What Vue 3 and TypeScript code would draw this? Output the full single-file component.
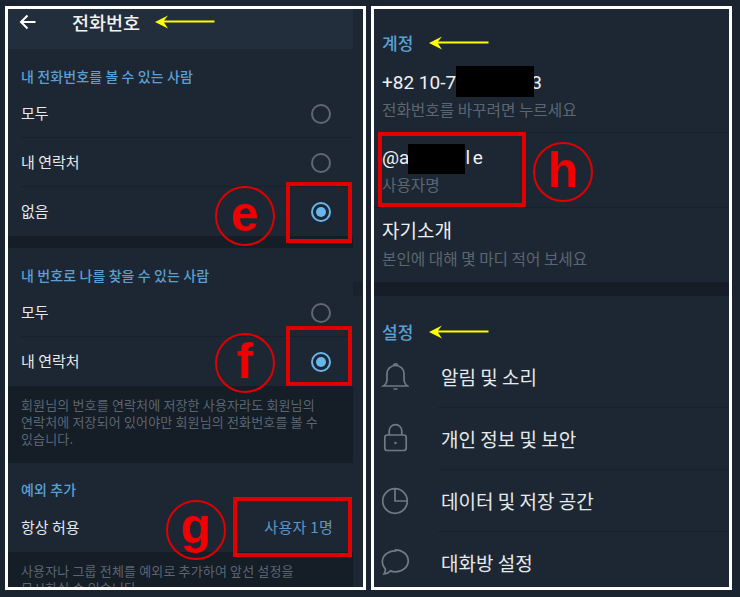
<script setup lang="ts">
const topRows = [
  { label: '모두', on: false },
  { label: '내 연락처', on: false },
  { label: '없음', on: true },
]
const findRows = [
  { label: '모두', on: false },
  { label: '내 연락처', on: true },
]
const menu = [
  { label: '알림 및 소리', icon: 'bell' },
  { label: '개인 정보 및 보안', icon: 'lock' },
  { label: '데이터 및 저장 공간', icon: 'pie' },
  { label: '대화방 설정', icon: 'chat' },
]
</script>

<template>
  <div class="page">
    <section class="panel left">
      <div class="inner">
        <header class="bar">
          <svg class="back" width="18" height="16" viewBox="0 0 18 16" fill="none" stroke="#fff" stroke-width="2">
            <path d="M16.5 8H2M8.5 1.5 2 8l6.5 6.500" />
          </svg>
          <span class="bar-title">전화번호</span>
          <svg class="arrow" width="60" height="16" viewBox="0 0 60 16"><path d="M0 8 13 1.500 9 6.600H59.500V8.600H9L13 14.500Z" fill="#ffff00" /></svg>
        </header>

        <div class="group first">
          <h3 class="sec">내 전화번호를 볼 수 있는 사람</h3>
          <div v-for="r in topRows" :key="r.label" class="row">
            <span class="label">{{ r.label }}</span>
            <span class="radio" :class="{ on: r.on }"></span>
          </div>
        </div>
        <div class="gap"></div>

        <div class="group second">
          <h3 class="sec">내 번호로 나를 찾을 수 있는 사람</h3>
          <div v-for="r in findRows" :key="r.label" class="row">
            <span class="label">{{ r.label }}</span>
            <span class="radio" :class="{ on: r.on }"></span>
          </div>
        </div>
        <p class="note">회원님의 번호를 연락처에 저장한 사용자라도 회원님의<br />연락처에 저장되어 있어야만 회원님의 전화번호를 볼 수<br />있습니다.</p>

        <div class="group third">
          <h3 class="sec">예외 추가</h3>
          <div class="row plain">
            <span class="label">항상 허용</span>
            <span class="value label">사용자 1명</span>
          </div>
        </div>
        <p class="note last">사용자나 그룹 전체를 예외로 추가하여 앞선 설정을<br />무시하실 수 있습니다.</p>

        <div class="edge"></div>
        <div class="mark box-e"></div>
        <div class="mark box-f"></div>
        <div class="mark box-g"></div>
        <div class="badge badge-e">e</div>
        <div class="badge badge-f">f</div>
        <div class="badge badge-g">g</div>
      </div>
    </section>

    <section class="panel right">
      <div class="inner">
        <div class="account">
          <h3 class="sec big">계정
            <svg width="60" height="16" viewBox="0 0 60 16"><path d="M0 8 13 1.500 9 6.600H59.500V8.600H9L13 14.500Z" fill="#ffff00" /></svg>
          </h3>
          <div class="info phone">
            <div class="main">+82 10-7<span class="mask phone-mask"></span>3</div>
            <div class="sub">전화번호를 바꾸려면 누르세요</div>
          </div>
          <div class="info user">
            <div class="main">@a<span class="mask user-mask"></span>l e</div>
            <div class="sub">사용자명</div>
          </div>
          <div class="info bio">
            <div class="main">자기소개</div>
            <div class="sub">본인에 대해 몇 마디 적어 보세요</div>
          </div>
        </div>
        <div class="gap wide"></div>
        <div class="settings">
          <h3 class="sec big">설정
            <svg width="60" height="16" viewBox="0 0 60 16"><path d="M0 8 13 1.500 9 6.600H59.500V8.600H9L13 14.500Z" fill="#ffff00" /></svg>
          </h3>
          <div v-for="m in menu" :key="m.label" class="menu-row">
            <svg class="ico" width="28" height="30" viewBox="0 0 28 30" fill="none" stroke="#6f7a86" stroke-width="1.700">
              <template v-if="m.icon === 'bell'">
                <path d="M2.500 25c2.500-1.500 3.500-3.500 3.500-7.500v-5C6 8 9.500 4.500 14.500 4.500S23 8 23 12.500v5c0 4 1 6 3.500 7.500z" />
                <path d="M12.500 4.700c0-2.500 4-2.500 4 0M12.500 28h4" />
              </template>
              <template v-else-if="m.icon === 'lock'">
                <rect x="3.800" y="12" width="21.400" height="15.500" rx="2.500" />
                <path d="M8.200 12V8c0-3.600 2.700-6.300 6.300-6.300S20.800 4.400 20.800 8v4" />
                <circle cx="14.500" cy="20" r="1.200" fill="#6f7a86" stroke="none" />
              </template>
              <template v-else-if="m.icon === 'pie'">
                <circle cx="14" cy="16" r="12.300" />
                <path d="M14 3.700V16h12.300" />
              </template>
              <template v-else>
                <path d="M14.500 2.800c7 0 12.700 4.900 12.700 11s-5.700 11-12.700 11c-1.800 0-3.500-.3-5-.9-1.600 1.800-3.900 2.900-6.500 3.100 1-1.500 1.500-3.200 1.300-5.100-1.900-2-3-4.700-3-7.100 0-6.100 5.700-11 13.200-11z" />
              </template>
            </svg>
            <span class="menu-label">{{ m.label }}</span>
          </div>
        </div>

        <div class="mark box-h"></div>
        <div class="badge badge-h">h</div>
      </div>
    </section>
  </div>
</template>

<style>
html,
body {
  margin: 0;
  background: #1a2330;
}
</style>

<style scoped>
.page {
  width: 740px;
  height: 597px;
  box-sizing: border-box;
  padding: 6px 0 7px 5px;
  display: flex;
  gap: 5px;
  overflow: hidden;
  background: #1a2330;
  font-family: 'Noto Sans CJK KR', 'Liberation Sans', sans-serif;
  color: #e6e9ec;
}
.panel {
  width: 361px;
  height: 584px;
  box-sizing: border-box;
  border: 3px solid #fff;
  overflow: hidden;
  flex: none;
}
.inner {
  position: relative;
  height: 100%;
  overflow: hidden;
  background: #1d2733;
}
.bar {
  height: 40px;
  width: 345px;
  background: #232e3c;
  display: flex;
  align-items: center;
  padding: 0 0 14px 11px;
  box-sizing: border-box;
}
.bar-title {
  font-size: 18.500px;
  font-weight: 500;
  color: #f2f2f2;
  margin-left: 35px;
  line-height: 1;
}
.arrow {
  margin-left: 15px;
}
.group {
  width: 345px;
  padding-left: 13px;
  box-sizing: border-box;
}
.first,
.second {
  padding-top: 17px;
}
.third {
  padding-top: 16px;
}
.sec {
  margin: 0 0 3px;
  font-size: 14px;
  letter-spacing: 0.1px;
  font-weight: 500;
  line-height: 20px;
  color: #5aa0d4;
}
.row {
  height: 49px;
  display: flex;
  align-items: center;
  justify-content: space-between;
  font-size: 15px;
  color: #e6e9ec;
  box-shadow: inset 0 -1px 0 #18202b;
  padding-right: 22px;
}
.label {
  padding-bottom: 2px;
}
.group .row:last-child {
  box-shadow: none;
}
.plain {
  height: 50px;
  padding-right: 20px;
}
.radio {
  width: 16px;
  height: 16px;
  border: 2px solid #60676f;
  border-radius: 50%;
  display: block;
  position: relative;
}
.radio.on {
  border-color: #67b6ec;
}
.radio.on::after {
  content: '';
  position: absolute;
  inset: 3px;
  border-radius: 50%;
  background: #67b6ec;
}
.gap {
  height: 12px;
  width: 345px;
  background: #151d27;
}
.note {
  margin: 0;
  width: 345px;
  box-sizing: border-box;
  background: #151d27;
  color: #5b6672;
  font-size: 13px;
  letter-spacing: 0.15px;
  line-height: 17px;
  padding: 10px 0 16px 13px;
}
.value {
  color: #5b97c8;
  font-size: 15px;
  letter-spacing: 0.3px;
}
.edge {
  position: absolute;
  left: 345px;
  top: 273px;
  width: 9px;
  height: 14px;
  background: #18212c;
}
.mark {
  position: absolute;
  border: 4px solid #e00000;
  box-sizing: border-box;
  pointer-events: none;
}
.box-e { left: 278px; top: 173px; width: 66px; height: 61px; }
.box-f { left: 278px; top: 317px; width: 66px; height: 60px; }
.box-g { left: 225px; top: 488px; width: 119px; height: 60px; }
.box-h { left: 4px; top: 123px; width: 148px; height: 75px; }
.badge {
  position: absolute;
  width: 60px;
  height: 60px;
  box-sizing: border-box;
  border: 2px solid #e00000;
  border-radius: 50%;
  color: #f00000;
  font-family: 'Liberation Sans', sans-serif;
  font-weight: 700;
  font-size: 50px;
  line-height: 52px;
  text-align: center;
}
.badge-e { left: 207px; top: 177px; }
.badge-f { left: 207px; top: 324px; }
.badge-g { left: 158px; top: 491px; line-height: 48px; }
.badge-h { left: 159px; top: 133px; }
.account {
  padding: 24px 0 0 8px;
}
.sec.big {
  margin: 0;
  font-size: 17px;
  letter-spacing: 0;
  display: flex;
  align-items: center;
  gap: 16px;
}
.info {
  box-sizing: border-box;
  margin-left: -8px;
  padding-left: 8px;
  border-bottom: 1px solid #18202b;
}
.phone {
  height: 80px;
  padding-top: 18px;
}
.user {
  height: 75px;
  padding-top: 13px;
  word-spacing: -2px;
}
.bio {
  height: 74px;
  padding-top: 12px;
  border-bottom: 0;
}
.main {
  height: 24px;
  font-size: 19px;
  line-height: 24px;
  color: #eef0f2;
  font-family: Roboto, 'Noto Sans CJK KR', sans-serif;
  display: flex;
  align-items: center;
  white-space: pre;
}
.sub {
  font-size: 15.700px;
  line-height: 20px;
  color: #5b6672;
  margin-top: 5px;
}
.mask {
  display: block;
  flex: none;
  background: #000;
  position: relative;
  z-index: 1;
}
.phone-mask {
  width: 78px;
  height: 31px;
  top: -2px;
  margin-right: -3px;
}
.user-mask {
  width: 57px;
  height: 30px;
  top: 1px;
  margin-left: -1px;
}
.wide {
  width: 100%;
  height: 14px;
}
.settings {
  padding: 26px 0 0 8px;
}
.menu-row {
  height: 62px;
  box-sizing: border-box;
  padding-bottom: 2px;
  display: flex;
  align-items: center;
  position: relative;
}
.sec + .menu-row {
  margin-top: 4px;
}
.menu-row:not(:last-child)::after {
  content: '';
  position: absolute;
  left: 56px;
  right: 0;
  bottom: 0;
  height: 1px;
  background: #18202b;
}
.ico {
  flex: none;
  margin-left: -1px;
}
.menu-label {
  margin-left: 32px;
  font-size: 19px;
  color: #e6e9ec;
}
</style>
